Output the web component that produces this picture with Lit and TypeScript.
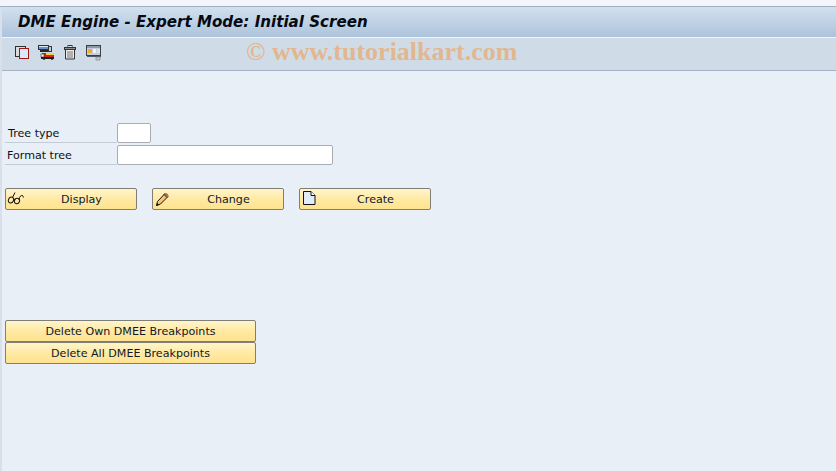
import { LitElement, html, css, svg } from "lit";
import { customElement } from "lit/decorators.js";

const icons = {
  copy: svg`<svg class="ti" viewBox="0 0 15 15" width="15" height="15"><rect x="0.500" y="1.500" width="10" height="10" fill="#dcdcdc" stroke="#2f2f2f"/><rect x="4.500" y="3.500" width="9" height="10" fill="#dbe8f6" stroke="#98181c"/></svg>`,
  transport: svg`<svg class="ti" viewBox="0 0 18 16" width="18" height="16"><rect x="0.500" y="0.500" width="10" height="4" fill="#6f93c4" stroke="#27344f"/><rect x="1" y="1" width="9" height="1" fill="#dbe6f2"/><rect x="10.500" y="1.500" width="3" height="5" fill="#c5ced9" stroke="#333"/><rect x="2" y="5" width="8" height="2" fill="#26262a"/><rect x="4" y="8" width="12" height="4" fill="#dd1c1c"/><rect x="8" y="8" width="8" height="2" fill="#f4d428"/><rect x="3" y="9" width="3" height="3" fill="#f2f2f2" stroke="#333" stroke-width=".6"/><rect x="3" y="12" width="13" height="2" fill="#202020"/><rect x="5" y="14" width="2" height="1" fill="#555"/><rect x="13" y="14" width="2" height="1" fill="#555"/></svg>`,
  trash: svg`<svg class="ti" viewBox="0 0 14 16" width="14" height="16"><rect x="0.500" y="2.500" width="11" height="2" fill="#8f8f8f" stroke="#333"/><rect x="4" y="0.500" width="4" height="2" fill="none" stroke="#333"/><path d="M1.500 4.500h9v9.500h-9z" fill="#ececec" stroke="#333"/><path d="M4 6v7M6 6v7M8 6v7" stroke="#777"/></svg>`,
  overview: svg`<svg class="ti" viewBox="0 0 16 16" width="16" height="16"><rect x="0.500" y="0.500" width="14" height="10" fill="#c3cfdc" stroke="#3a3f48"/><rect x="1" y="1" width="13" height="2" fill="#8d99a8"/><rect x="2" y="4" width="4" height="4" fill="#f1aa35"/><rect x="7" y="4" width="3" height="4" fill="#f2f2f2"/><rect x="11" y="4" width="3" height="4" fill="#e0e0e0"/><rect x="1" y="11" width="14" height="1" fill="#55595f"/><rect x="10" y="12" width="4" height="3" fill="#c9c9c9" stroke="#777" stroke-width=".6"/></svg>`,
  glasses: svg`<svg class="bi glasses" viewBox="0 0 18 14" width="18" height="14"><ellipse cx="4" cy="9" rx="2.500" ry="3" fill="none" stroke="#111" transform="rotate(25 4 9)"/><ellipse cx="10" cy="10" rx="2.500" ry="2.800" fill="none" stroke="#111" transform="rotate(25 10 10)"/><path d="M5.500 6.500L8 1.500M7 8.500L8.500 8M12 8.500C12.500 5.500 14 4 15.500 4.500L16.500 6.500" fill="none" stroke="#111"/></svg>`,
  pencil: svg`<svg class="bi pencil" viewBox="0 0 14 15" width="14" height="15"><path d="M1.500 13.500l1-4 7.500-8 3 3-7.500 7.500z" fill="#f6c678" stroke="#111"/><path d="M9 2.500l3 3" stroke="#111"/><path d="M10 1.500l3 3 .5-1.500-2-2z" fill="#d8614b"/><path d="M1 14l1-3 2 2z" fill="#111"/></svg>`,
  page: svg`<svg class="bi page" viewBox="0 0 13 14" width="13" height="14"><path d="M.500.500h7.500l4 4v9h-11.500z" fill="#e0ecf8" stroke="#111"/><path d="M8 .500v4h4" fill="#fff" stroke="#111"/></svg>`,
};

@customElement("app-root")
export class AppRoot extends LitElement {
  static styles = css`
    :host {
      display: block;
      position: relative;
      width: 836px;
      height: 471px;
      overflow: hidden;
      background: #e8eff7;
      font-family: "DejaVu Sans", "Noto Sans", sans-serif;
      font-size: 11.1px;
      color: #111;
    }
    .shell {
      display: flex;
      flex-direction: column;
      height: 100%;
      box-sizing: border-box;
      border-left: 2px solid #d9e0e9;
    }
    .top {
      height: 6px;
      margin-left: -2px;
      background: #f2f5fa;
      border-bottom: 1px solid #a3aec4;
    }
    .title {
      height: 31px;
      box-sizing: border-box;
      padding-left: 16px;
      background: linear-gradient(#d2e0ee, #adc3db);
      border-bottom: 1px solid #f0f5f9;
      display: flex;
      align-items: center;
      font-weight: bold;
      font-style: italic;
      font-size: 15.1px;
      color: #060a12;
      white-space: nowrap;
    }
    .toolbar {
      height: 33px;
      box-sizing: border-box;
      background: #cfdce8;
      border-bottom: 1px solid #a4b3c6;
      padding: 7px 0 0 13px;
      display: flex;
      align-items: flex-start;
      gap: 8px;
    }
    .ti {
      display: block;
      flex: none;
    }
    .watermark {
      position: absolute;
      left: 246px;
      top: 37px;
      font-family: "Liberation Serif", serif;
      font-weight: bold;
      font-size: 26px;
      color: #e5b487;
      opacity: 0.9;
      white-space: nowrap;
    }
    .content {
      flex: 1;
      padding: 52px 0 0 3px;
      display: flex;
      flex-direction: column;
    }
    .row {
      display: flex;
      height: 22px;
      align-items: flex-start;
    }
    .label {
      width: 112px;
      height: 20px;
      box-sizing: border-box;
      border-bottom: 1px solid #c3ccd7;
      line-height: 21px;
      padding-left: 3px;
      white-space: nowrap;
    }
    .label.second {
      padding-left: 2px;
    }
    .input {
      box-sizing: border-box;
      height: 20px;
      background: #fff;
      border: 1px solid #a7adb3;
      border-radius: 2px;
    }
    .short { width: 34px; }
    .long { width: 216px; }
    .actions {
      display: flex;
      gap: 15px;
      margin-top: 21px;
    }
    .btn {
      box-sizing: border-box;
      position: relative;
      height: 22px;
      display: flex;
      align-items: center;
      justify-content: center;
      background: linear-gradient(#fff5cc, #ffe9a0 55%, #fee28e);
      border: 1px solid #7f7f78;
      border-radius: 2px;
      color: #10172a;
      white-space: nowrap;
    }
    .act { width: 132px; padding-left: 21px; }
    .del { width: 251px; }
    .bi { position: absolute; }
    .glasses { left: 1px; top: 2px; }
    .pencil { left: 2px; top: 3px; }
    .page { left: 3px; top: 2px; }
    .stack {
      display: flex;
      flex-direction: column;
      margin-top: 110px;
    }
  `;

  render() {
    return html`
      <div class="shell">
        <div class="top"></div>
        <div class="title">DME Engine - Expert Mode: Initial Screen</div>
        <div class="toolbar">
          ${icons.copy}${icons.transport}${icons.trash}${icons.overview}
        </div>
        <div class="content">
          <div class="row">
            <div class="label">Tree type</div>
            <div class="input short"></div>
          </div>
          <div class="row">
            <div class="label second">Format tree</div>
            <div class="input long"></div>
          </div>
          <div class="actions">
            <div class="btn act">${icons.glasses}Display</div>
            <div class="btn act">${icons.pencil}Change</div>
            <div class="btn act">${icons.page}Create</div>
          </div>
          <div class="stack">
            <div class="btn del">Delete Own DMEE Breakpoints</div>
            <div class="btn del">Delete All DMEE Breakpoints</div>
          </div>
        </div>
      </div>
      <div class="watermark">© www.tutorialkart.com</div>
    `;
  }
}
